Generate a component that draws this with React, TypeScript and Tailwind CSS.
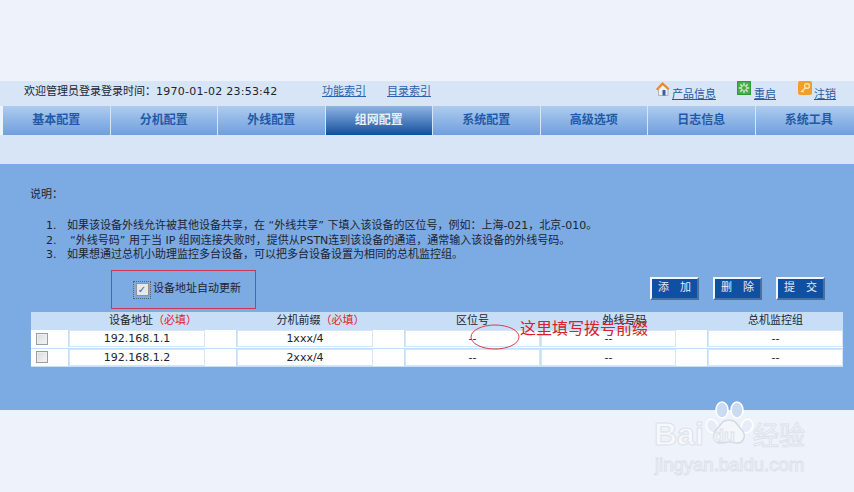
import React from 'react'

const tabs = ['基本配置', '分机配置', '外线配置', '组网配置', '系统配置', '高级选项', '日志信息', '系统工具']

const rows = [
  { ip: '192.168.1.1', prefix: '1xxx/4' },
  { ip: '192.168.1.2', prefix: '2xxx/4' },
]

// fullwidth punctuation
const COMMA = '\uFF0C'
const COLON = '\uFF1A'
const REQUIRED = '\uFF08必填\uFF09'

function Field({ value, className }: { value: string; className: string }) {
  return (
    <div className={`h-[17px] border border-[#d5e6f6] bg-white text-center leading-[16px] ${className}`}>{value}</div>
  )
}

function Box() {
  return (
    <div className="size-[12px] border border-[#9a9ea3] bg-gradient-to-br from-[#d8dadc] to-[#f6f6f6] shadow-[inset_0_0_0_1px_#eeeeee]" />
  )
}

function ActionButton({ label }: { label: string }) {
  return (
    <button className="h-[23px] w-[49px] whitespace-nowrap border-2 border-t-[#f2f6fc] border-l-[#f2f6fc] border-r-[#49709f] border-b-[#49709f] bg-[#0f50a3] pl-[6px] text-left text-[11px] tracking-[11px] text-[#e6edf7]">
      {label}
    </button>
  )
}

function HouseIcon() {
  return (
    <svg width="16" height="16" viewBox="0 0 16 16">
      <path d="M3.5 8v6.5h9.5V8L8 3.5z" fill="#eef0f4" stroke="#8a93a3" strokeWidth="0.6" />
      <path d="M1 8 7.5 1 14.5 7.5 13 9 7.5 4 2.4 9.5z" fill="#e8872c" />
      <rect x="7.5" y="9" width="3" height="5.5" fill="#3a5f9e" />
    </svg>
  )
}

function RestartIcon() {
  return (
    <svg width="14" height="14" viewBox="0 0 14 14">
      <rect width="14" height="14" fill="#2f9a3a" />
      <rect x="1" y="1" width="12" height="12" fill="#49ab4c" />
      <g stroke="#e8f7d8" strokeWidth="1.3" strokeLinecap="round">
        <path d="M7 2.5v2M7 9.5v2M2.5 7h2M9.5 7h2M3.8 3.8l1.4 1.4M8.8 8.8l1.4 1.4M10.2 3.8 8.8 5.2M5.2 8.8l-1.4 1.4" />
      </g>
    </svg>
  )
}

function KeyIcon() {
  return (
    <svg width="14" height="14" viewBox="0 0 14 14">
      <rect width="14" height="14" rx="2" fill="#eda02f" />
      <circle cx="9" cy="5" r="2.4" fill="none" stroke="#fbe9b8" strokeWidth="1.2" />
      <path d="M7.4 6.8 3 11.2M4.4 9.8l1.3 1.3" stroke="#fbe9b8" strokeWidth="1.2" fill="none" />
    </svg>
  )
}

function Watermark() {
  return (
    <div className="absolute left-[654px] top-[400px] h-[74px] w-[154px] font-['Liberation_Sans','Noto_Sans_CJK_SC',sans-serif] text-[#f6f8fc] [-webkit-text-stroke:1px_#dde2ea]">
      <span className="absolute left-0 top-[15px] text-[32px] font-bold leading-[38px]">Bai</span>
      <svg className="absolute left-[50px] top-0" width="50" height="50" viewBox="0 0 50 50">
        <g fill="#e6edf8" stroke="#ffffff" strokeWidth="1.5">
          <ellipse cx="8" cy="26" rx="5.5" ry="7" transform="rotate(-20 8 26)" />
          <ellipse cx="18" cy="10" rx="6" ry="8" fill="#c9daf2" />
          <ellipse cx="33" cy="10" rx="6" ry="8" fill="#c9daf2" />
          <ellipse cx="43" cy="26" rx="5.5" ry="7" transform="rotate(20 43 26)" />
          <path d="M25 20c7 0 8 5 13 10 5 6 1 14-6 13-3-.4-5-1-7-1s-4 .6-7 1c-7 1-11-7-6-13 5-5 6-10 13-10z" fill="#f3f6fb" stroke="#d4dae4" />
        </g>
      </svg>
      <span className="absolute left-[59px] top-[26px] text-[18px] font-bold leading-[20px]">du</span>
      <span className="absolute left-[99px] top-[21px] text-[26px] leading-[30px]">经验</span>
      <span className="absolute left-[1px] top-[54px] text-[18.5px] leading-[22px]">jingyan.baidu.com</span>
    </div>
  )
}

export default function App() {
  return (
    <div className="relative h-[492px] w-[854px] overflow-hidden bg-[#edf2fb] font-['DejaVu_Sans','Noto_Sans_CJK_SC',sans-serif] text-[11px] text-[#1c2430]">
      <div className="h-[81px]" />

      {/* top links */}
      <div className="flex h-[25px] items-start bg-[#d7e5f6] pl-[24px]">
        <span className="mt-[3px] w-[298px] whitespace-nowrap">欢迎管理员登录登录时间{COLON}<span className="tracking-[0.25px]">1970-01-02 23:53:42</span></span>
        <a className="mt-[3px] w-[65px] text-[#2a63ab] underline">功能索引</a>
        <a className="mt-[3px] w-[268px] text-[#2a63ab] underline">目录索引</a>
        <div className="flex items-start">
          <HouseIcon />
          <a className="ml-[1px] mt-[6px] text-[#1f5aa3] underline">产品信息</a>
          <span className="ml-[21px]"><RestartIcon /></span>
          <a className="ml-[3px] mt-[6px] text-[#1f5aa3] underline">重启</a>
          <span className="ml-[22px]"><KeyIcon /></span>
          <a className="ml-[2px] mt-[6px] text-[#1f5aa3] underline">注销</a>
        </div>
      </div>

      {/* nav tabs */}
      <div className="grid h-[29px] w-[863px] grid-cols-8 pl-[3px]">
        {tabs.map((tab, i) => (
          <div
            key={tab}
            className={
              i === 3
                ? "flex items-center justify-center border-r border-[#d7e5f6] bg-gradient-to-b from-[#8fb4e2] to-[#08509f] pb-[2px] text-[12px] font-bold text-[#e8f0fa]"
                : "flex items-center justify-center border-r border-[#d7e5f6] bg-gradient-to-b from-[#aecbef] to-[#6f9fdd] pb-[2px] text-[12px] font-bold text-[#1f5aa8]"
            }
          >
            {tab}
          </div>
        ))}
      </div>

      <div className="h-[29px] bg-[#d7e5f6]" />

      {/* main panel */}
      <div className="h-[246px] bg-[#7caae3] pl-[30px] pt-[23px]">
        <p className="h-[14px] leading-[15px]">说明{COLON}</p>

        <ol className="mt-[18px] h-[45px] pl-[16px] leading-[14.5px]">
          <li className="flex"><span className="w-[21px]">1.</span><span>如果该设备外线允许被其他设备共享{COMMA}在 “外线共享” 下填入该设备的区位号{COMMA}例如{COLON}上海-021{COMMA}北京-010。</span></li>
          <li className="flex"><span className="w-[21px]">2.</span><span className="pl-[3px]">“外线号码” 用于当 IP 组网连接失败时{COMMA}提供从PSTN连到该设备的通道{COMMA}通常输入该设备的外线号码。</span></li>
          <li className="flex"><span className="w-[21px]">3.</span><span>如果想通过总机小助理监控多台设备{COMMA}可以把多台设备设置为相同的总机监控组。</span></li>
        </ol>

        <div className="mt-[6px] flex h-[39px] items-start">
          <div className="ml-[81px] flex h-[39px] w-[145px] items-center border border-[#c8385a] pl-[21px]">
            <div className="flex size-[18px] items-center justify-center border border-dotted border-[#59616b]">
              <div className="flex size-[13px] items-center justify-center border border-[#8f949a] bg-[#e6e8ea] text-[10px] leading-none text-[#3b5fa8]">✓</div>
            </div>
            <span className="ml-[2px]">设备地址自动更新</span>
          </div>
          <div className="ml-[394px] mt-[7px] flex gap-[14px]">
            <ActionButton label="添加" />
            <ActionButton label="删除" />
            <ActionButton label="提交" />
          </div>
        </div>

        {/* device table */}
        <div className="ml-[1px] mt-[3px] w-[812px]">
          <div className="grid h-[18px] grid-cols-[38px_168px_167px_137px_167px_135px] items-center bg-[#c7def6] text-center">
            <span />
            <span>设备地址<span className="text-[#e0202a]">{REQUIRED}</span></span>
            <span>分机前缀<span className="text-[#e0202a]">{REQUIRED}</span></span>
            <span>区位号</span>
            <span>外线号码</span>
            <span>总机监控组</span>
          </div>
          {rows.map(row => (
            <div key={row.ip} className="grid h-[18.5px] grid-cols-[37px_168px_168px_136px_167px_136px] items-center border-b border-[#c7def6] bg-white">
              <div className="pl-[5px]"><Box /></div>
              <div className="border-l border-[#c7def6]"><Field value={row.ip} className="w-[136px]" /></div>
              <div className="border-l border-[#c7def6]"><Field value={row.prefix} className="w-[136px]" /></div>
              <div className="border-l border-[#c7def6]"><Field value="--" className="w-[135px]" /></div>
              <div className="border-l border-[#c7def6]"><Field value="--" className="w-[135px]" /></div>
              <div className="border-l border-[#c7def6]"><Field value="--" className="w-[135px]" /></div>
            </div>
          ))}
        </div>
      </div>

      {/* annotation drawn over the screenshot */}
      <svg className="absolute left-[470px] top-[323px]" width="52" height="28" viewBox="0 0 52 28">
        <ellipse cx="25" cy="14" rx="24" ry="12" fill="none" stroke="#d84048" strokeWidth="1" />
      </svg>
      <span className="absolute left-[520px] top-[317px] font-['Noto_Sans_CJK_SC',sans-serif] text-[16px] leading-[20px] text-[#d8202a]">这里填写拨号前缀</span>

      <Watermark />
    </div>
  )
}
